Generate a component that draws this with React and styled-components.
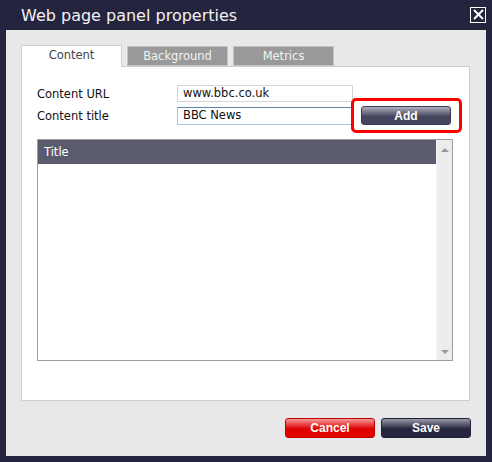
import React from 'react'
import styled, { createGlobalStyle } from 'styled-components'

const GlobalStyle = createGlobalStyle`
  * { box-sizing: border-box; }
  body {
    margin: 0;
    background: #25243f;
    font-family: "DejaVu Sans", Verdana, sans-serif;
  }
`

const Window = styled.div`
  width: 492px;
  height: 462px;
  background: #25243f;
  display: flex;
  flex-direction: column;
`

const TitleBar = styled.div`
  height: 30px;
  display: flex;
  align-items: center;
  justify-content: space-between;
  padding: 0 6px 0 21px;
  h1 {
    margin: 0;
    font-size: 16px;
    font-weight: normal;
    color: #f2f2f2;
    line-height: 30px;
    padding-top: 1px;
  }
`

const CloseBox = styled.div`
  width: 16px;
  height: 16px;
  margin-top: -1px;
  border: 1.5px solid #fff;
  display: flex;
  align-items: center;
  justify-content: center;
`

const Body = styled.div`
  flex: 1;
  margin: 0 6px 6px;
  background: #e8e8ea;
  padding: 15px 16px 0 15px;
  display: flex;
  flex-direction: column;
`

const Tabs = styled.div`
  display: flex;
  align-items: flex-end;
  gap: 5px;
  height: 21px;
  position: relative;
  z-index: 1;
`

const Tab = styled.div`
  width: ${p => p.w}px;
  height: ${p => (p.active ? 22 : 20)}px;
  margin-bottom: ${p => (p.active ? -1 : 0)}px;
  border: 1px solid ${p => (p.active ? '#cfcfcf' : '#c4c4c4')};
  border-bottom: ${p => (p.active ? 'none' : '1px solid #c4c4c4')};
  background: ${p => (p.active ? '#fff' : '#999')};
  color: ${p => (p.active ? '#444' : '#f2f2f2')};
  font-size: 11.5px;
  text-align: center;
  line-height: 19px;
`

const Panel = styled.div`
  height: 335px;
  background: #fff;
  border: 1px solid #cfcfcf;
  padding: 18px 0 0 15px;
`

const Form = styled.div`
  display: grid;
  grid-template-columns: 132px 176px 90px;
  column-gap: 8px;
  row-gap: 4px;
  align-items: center;
  width: 416px;
`

const Label = styled.label`
  font-size: 11.5px;
  color: #111;
  line-height: 16px;
`

const Field = styled.div`
  height: ${p => (p.focus ? 18 : 17)}px;
  border: 1px solid ${p => (p.focus ? '#a9c4dc' : '#d6d6d6')};
  border-top-color: ${p => (p.focus ? '#5d87ad' : '#d6d6d6')};
  font-size: 11.5px;
  color: #111;
  padding: 0 5px;
  line-height: 15px;
  display: flex;
  align-items: center;
`

const AddWrap = styled.div`
  position: relative;
  width: 90px;
  align-self: end;
`

const Highlight = styled.div`
  position: absolute;
  left: -10px;
  right: -11px;
  top: -8px;
  bottom: -8px;
  border: 3px solid #ff0000;
  border-radius: 5px;
`

const Button = styled.div`
  width: 90px;
  height: ${p => p.h || 20}px;
  border-radius: 3px;
  border: 1px solid ${p => p.edge};
  background: linear-gradient(to bottom, ${p => p.top} 0%, ${p => p.bottom} 55%, ${p => p.bottom} 100%);
  color: #fff;
  font-family: "Liberation Sans", Arial, sans-serif;
  font-weight: bold;
  font-size: 12px;
  display: flex;
  align-items: center;
  justify-content: center;
`

const List = styled.div`
  margin-top: 14px;
  width: 416px;
  height: 222px;
  border: 1px solid #9d9d9d;
  display: flex;
`

const ListMain = styled.div`
  flex: 1;
  display: flex;
  flex-direction: column;
`

const ListHead = styled.div`
  height: 24px;
  background: #5b5b70;
  color: #fff;
  font-size: 11.5px;
  padding-left: 6px;
  display: flex;
  align-items: center;
`

const Scroll = styled.div`
  width: 16px;
  background: #ececec;
  border-left: 1px solid #f8f8f8;
  display: flex;
  flex-direction: column;
  justify-content: space-between;
  align-items: center;
  padding: 8px 0 6px;
`

const Arrow = styled.div`
  width: 0;
  height: 0;
  border-left: 4px solid transparent;
  border-right: 4px solid transparent;
  ${p => (p.down ? 'border-top: 4px solid #999;' : 'border-bottom: 4px solid #999;')}
`

const Footer = styled.div`
  display: flex;
  justify-content: flex-end;
  gap: 6px;
  margin-top: 17px;
  margin-right: -1px;
`

export default function App() {
  return (
    <Window>
      <GlobalStyle />
      <TitleBar>
        <h1>Web page panel properties</h1>
        <CloseBox>
          <svg width="11" height="11" viewBox="0 0 11 11">
            <path d="M1 1 L10 10 M10 1 L1 10" stroke="#fff" strokeWidth="2" />
          </svg>
        </CloseBox>
      </TitleBar>
      <Body>
        <Tabs>
          <Tab active w={101}>Content</Tab>
          <Tab w={101}>Background</Tab>
          <Tab w={101}>Metrics</Tab>
        </Tabs>
        <Panel>
          <Form>
            <Label>Content URL</Label>
            <Field>www.bbc.co.uk</Field>
            <span />
            <Label>Content title</Label>
            <Field focus>BBC News</Field>
            <AddWrap>
              <Highlight />
              <Button edge="#3a3a52" top="#b0b0c0" bottom="#45455f" h={19}>Add</Button>
            </AddWrap>
          </Form>
          <List>
            <ListMain>
              <ListHead>Title</ListHead>
            </ListMain>
            <Scroll>
              <Arrow />
              <Arrow down />
            </Scroll>
          </List>
        </Panel>
        <Footer>
          <Button edge="#c00000" top="#f59a9a" bottom="#e00000">Cancel</Button>
          <Button edge="#1f1f36" top="#9a9aaa" bottom="#25253f">Save</Button>
        </Footer>
      </Body>
    </Window>
  )
}
